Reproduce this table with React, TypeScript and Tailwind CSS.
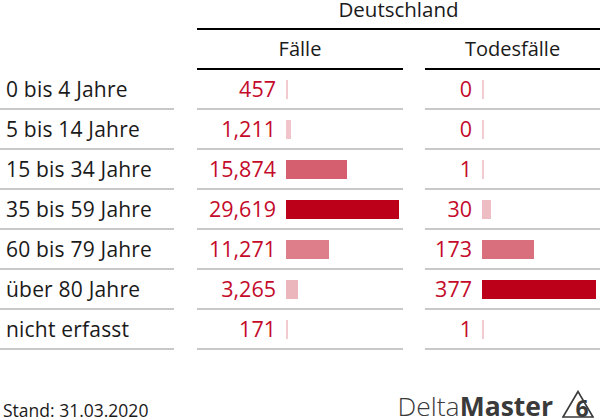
import React from "react";

type Row = { label: string; f: number; t: number };

const rows: Row[] = [
  { label: "0 bis 4 Jahre", f: 457, t: 0 },
  { label: "5 bis 14 Jahre", f: 1211, t: 0 },
  { label: "15 bis 34 Jahre", f: 15874, t: 1 },
  { label: "35 bis 59 Jahre", f: 29619, t: 30 },
  { label: "60 bis 79 Jahre", f: 11271, t: 173 },
  { label: "über 80 Jahre", f: 3265, t: 377 },
  { label: "nicht erfasst", f: 171, t: 1 },
];

const maxF = 29619;
const maxT = 377;

const fmt = (n: number) => n.toLocaleString("en-US");

function Bar({ value, max, width }: { value: number; max: number; width: number }) {
  const r = value / max;
  const w = Math.max(r * width, 1.5);
  const a = 0.2 + 0.8 * r;
  return (
    <div className="h-[19px]" style={{ width: w, backgroundColor: `rgba(189,0,25,${a})` }} />
  );
}

export default function App() {
  return (
    <div
      className="relative flex h-[420px] w-[600px] flex-col justify-between bg-white text-[#1a1a1a]"
      style={{ fontFamily: '"Open Sans", "Noto Sans", sans-serif' }}
    >
      <div>
        {/* header */}
        <div className="flex">
          <div className="w-[197px] shrink-0" />
          <div className="flex-1">
            <div className="h-[28px] text-center text-[20.5px] leading-[18px]">Deutschland</div>
            <div className="h-[2px] bg-black" />
          </div>
        </div>
        <div className="flex">
          <div className="w-[197px] shrink-0" />
          <div className="w-[206px] shrink-0">
            <div className="h-[38px] text-center text-[20px] leading-[38px]">Fälle</div>
            <div className="h-[2px] bg-black" />
          </div>
          <div className="w-[22px] shrink-0" />
          <div className="flex-1">
            <div className="h-[38px] text-center text-[20px] leading-[38px]">Todesfälle</div>
            <div className="h-[2px] bg-black" />
          </div>
        </div>
        {rows.map((r) => (
          <div key={r.label} className="flex">
            <div className="w-[174px] shrink-0 border-b-2 border-[#c8c8c8] pl-[6px] text-[21px] leading-[38px] tracking-[0.2px]">
              {r.label}
            </div>
            <div className="w-[23px] shrink-0" />
            <div className="flex h-[40px] w-[206px] shrink-0 items-center border-b-2 border-[#c8c8c8]">
              <div className="w-[79px] shrink-0 text-right text-[21.5px] leading-[38px] text-[#c40a2a]">
                {fmt(r.f)}
              </div>
              <div className="ml-[10px]">
                <Bar value={r.f} max={maxF} width={113} />
              </div>
            </div>
            <div className="w-[22px] shrink-0" />
            <div className="flex h-[40px] flex-1 items-center border-b-2 border-[#c8c8c8]">
              <div className="w-[47px] shrink-0 text-right text-[21.5px] leading-[38px] text-[#c40a2a]">
                {fmt(r.t)}
              </div>
              <div className="ml-[10px]">
                <Bar value={r.t} max={maxT} width={114} />
              </div>
            </div>
          </div>
        ))}
      </div>
      <div className="flex items-end justify-between pb-[1px] pl-[3px] pr-[6px]">
        <div className="text-[17.5px] leading-[18px]">Stand: 31.03.2020</div>
        <div className="flex items-end gap-[9px] text-[#3a3a3a]">
          <div className="text-[26.5px] leading-[26px]">
            <span className="font-light">Delta</span>
            <span className="font-bold">Master</span>
          </div>
          <svg width="32" height="29" viewBox="0 0 32 29">
            <polygon points="16,1.5 1,27 31,27" fill="none" stroke="#3a3a3a" strokeWidth="1.6" />
            <text x="20" y="26.5" textAnchor="middle" fontSize="23" fontWeight="700" fill="#3a3a3a" fontFamily="Open Sans, sans-serif">6</text>
          </svg>
        </div>
      </div>
    </div>
  );
}
